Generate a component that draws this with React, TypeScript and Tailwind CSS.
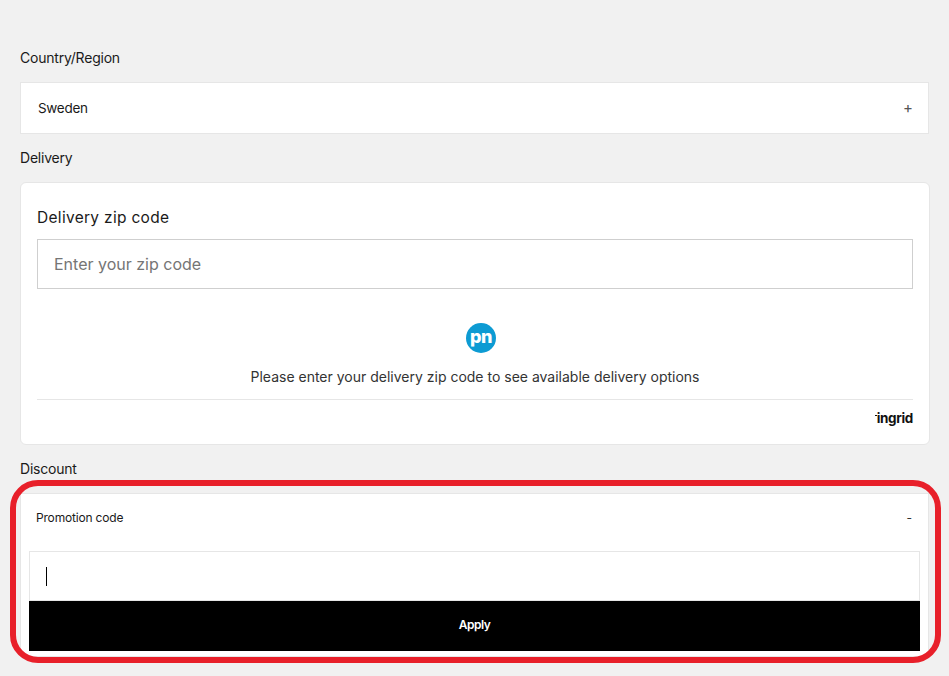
import React from 'react'

const PnLogo: React.FC = () => (
  <div className="w-[30px] h-[30px] rounded-full bg-[#0d9bd3] flex items-center justify-center">
    <span className="text-white font-['Inter',sans-serif] font-extrabold text-[18px] leading-none tracking-[-0.5px] -mt-[3px]">pn</span>
  </div>
)

const Label: React.FC<{ children: React.ReactNode }> = ({ children }) => (
  <div className="h-6 flex items-center text-[14px] text-[#1a1a1a] font-['Inter',sans-serif] tracking-[-0.22px]">{children}</div>
)

export default function App() {
  return (
    <div className="w-[949px] h-[676px] overflow-hidden bg-[#f1f1f1] relative pl-[20px] pr-5 pt-[45px] font-['Inter',sans-serif]">
      <Label>Country/Region</Label>

      <div className="mt-[13px] h-[52px] bg-white border border-[#e6e6e6] flex items-center justify-between pl-[17px] pr-[15px]">
        <span className="text-[13.5px] text-[#1a1a1a] tracking-[-0.3px]">Sweden</span>
        <span className="text-[15px] text-[#555] leading-none -mt-[2px]">+</span>
      </div>

      <div className="mt-[11px]"><Label>Delivery</Label></div>

      <div className="mt-[13px] h-[263px] w-[910px] bg-white border border-[#e6e6e6] rounded-md px-4 pt-[25px]">
        <div className="h-5 flex items-center text-[15.5px] text-[#1a1a1a] tracking-[0.3px]">Delivery zip code</div>
        <div className="mt-[11px] h-[50px] border border-[#cfcfcf] flex items-center pl-4 text-[16px] text-[#757575]">
          Enter your zip code
        </div>
        <div className="mt-[34px] flex justify-center"><div className="ml-3"><PnLogo /></div></div>
        <div className="mt-[13px] h-5 flex items-center justify-center text-[14px] text-[#333]">
          Please enter your delivery zip code to see available delivery options
        </div>
        <div className="mt-[13px] border-t border-[#e6e6e6] flex justify-end pt-[10px]">
          <div className="flex items-start">
            <div className="w-[2px] h-px bg-[#111] mt-[5px]" />
            <span className="text-[13.5px] leading-[16px] font-bold text-[#111] tracking-[-0.35px]">ingrid</span>
          </div>
        </div>
      </div>

      <div className="mt-[11px]"><Label>Discount</Label></div>

      <div className="mt-[13px] h-[164px] bg-white border border-[#e6e6e6] px-2">
        <div className="h-[47px] flex items-center justify-between pl-[7px] pr-[3px]">
          <span className="text-[12px] text-[#1a1a1a] tracking-[-0.18px]">Promotion code</span>
          <span className="text-[12px] text-[#333] mr-[5px]">-</span>
        </div>
        <div className="mt-[10px] h-[50px] border border-[#e6e6e6] flex items-center pl-4">
          <div className="w-px h-[19px] bg-black" />
        </div>
        <div className="h-[50px] bg-black flex items-center justify-center text-white text-[12px] font-semibold tracking-[-0.5px] pb-[2px]">
          Apply
        </div>
      </div>

      {/* red annotation drawn over the promo section */}
      <div className="absolute left-[10px] top-[480px] w-[931px] h-[183px] border-[6px] border-[#e8202a] rounded-[28px] pointer-events-none" />
    </div>
  )
}
